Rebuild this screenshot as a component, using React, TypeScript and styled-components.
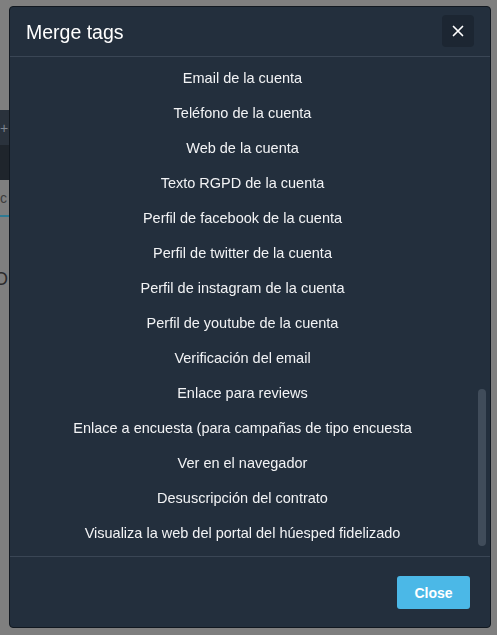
import React from "react";
import styled, { createGlobalStyle } from "styled-components";

const GlobalStyle = createGlobalStyle`
  html, body {
    margin: 0;
    padding: 0;
    width: 100%;
    height: 100%;
    overflow: hidden;
    background: #7f7f7f;
    font-family: "Liberation Sans", Arial, Helvetica, sans-serif;
  }
`;

const Page = styled.div`
  width: 497px;
  height: 635px;
  display: flex;
  flex-direction: column;
  background: #7f7f7f;
`;

const SidePanel = styled.div`
  width: 240px;
  display: flex;
  flex-direction: column;
`;

const Spacer = styled.div<{ $h: number }>`
  height: ${(p) => p.$h}px;
  flex-shrink: 0;
`;

const UnderBar = styled.div<{ $bg: string }>`
  height: 35px;
  background: ${(p) => p.$bg};
  display: flex;
  align-items: center;
  color: #7d8590;
  font-size: 14px;
  padding-left: 0;
`;

const UnderInput = styled.div`
  height: 35px;
  border-bottom: 2px solid #2f7a93;
  display: flex;
  align-items: center;
  color: #3c3c3c;
  font-size: 14px;
`;

const UnderText = styled.div`
  color: #2b2b2b;
  font-size: 18px;
  margin-left: -6px;
`;

const Modal = styled.div`
  position: fixed;
  left: 9px;
  top: 6px;
  width: 482px;
  height: 622px;
  box-sizing: border-box;
  background: #232f3d;
  border: 1px solid #111820;
  border-radius: 4px;
  display: flex;
  flex-direction: column;
  overflow: hidden;
`;

const Header = styled.div`
  height: 50px;
  box-sizing: border-box;
  padding: 0 16px;
  display: flex;
  align-items: center;
  justify-content: space-between;
  border-bottom: 1px solid #3a4655;
  flex-shrink: 0;
`;

const Title = styled.h2`
  margin: 0;
  font-size: 19.5px;
  font-weight: 400;
  color: #ffffff;
  padding-top: 1px;
`;

const IconButton = styled.button`
  width: 32px;
  height: 32px;
  border: none;
  border-radius: 4px;
  background: #1c2632;
  color: #ffffff;
  display: flex;
  align-items: center;
  justify-content: center;
  padding: 0;
  margin-top: -1px;
  cursor: pointer;
`;

const Body = styled.div`
  position: relative;
  flex: 1;
  overflow: hidden;
  border-bottom: 1px solid #3a4655;
`;

const List = styled.ul`
  list-style: none;
  margin: 0;
  padding: 3px 15px 0 0;
  display: flex;
  flex-direction: column;
`;

const Item = styled.li`
  height: 35px;
  display: flex;
  align-items: center;
  justify-content: center;
  color: #f2f3f5;
  font-size: 14.5px;
  white-space: nowrap;
`;

const ScrollThumb = styled.div`
  position: absolute;
  right: 4px;
  bottom: 10px;
  width: 8px;
  height: 157px;
  border-radius: 4px;
  background: #404c5a;
`;

const Footer = styled.div`
  height: 70px;
  box-sizing: border-box;
  padding: 0 20px 0;
  display: flex;
  align-items: center;
  justify-content: flex-end;
  flex-shrink: 0;
`;

const PrimaryButton = styled.button`
  width: 73px;
  height: 33px;
  border: none;
  border-radius: 3px;
  background: #4bb8e7;
  color: #ffffff;
  font-family: "Liberation Sans", Arial, sans-serif;
  font-weight: 700;
  font-size: 14px;
  cursor: pointer;
  margin-top: 1px;
`;

const items = [
  "Email de la cuenta",
  "Teléfono de la cuenta",
  "Web de la cuenta",
  "Texto RGPD de la cuenta",
  "Perfil de facebook de la cuenta",
  "Perfil de twitter de la cuenta",
  "Perfil de instagram de la cuenta",
  "Perfil de youtube de la cuenta",
  "Verificación del email",
  "Enlace para reviews",
  "Enlace a encuesta (para campañas de tipo encuesta",
  "Ver en el navegador",
  "Desuscripción del contrato",
  "Visualiza la web del portal del húesped fidelizado",
];

export default function App() {
  return (
    <>
      <GlobalStyle />
      <Page>
        <SidePanel>
          <Spacer $h={110} />
          <UnderBar $bg="#2a323c">+</UnderBar>
          <UnderBar $bg="#1f252c" />
          <UnderInput>c</UnderInput>
          <Spacer $h={52} />
          <UnderText>O</UnderText>
        </SidePanel>
      </Page>
      <Modal role="dialog" aria-label="Merge tags">
        <Header>
          <Title>Merge tags</Title>
          <IconButton aria-label="Close">
            <svg width="14" height="14" viewBox="0 0 14 14">
              <path d="M2.5 2.5 L11.5 11.5 M11.5 2.5 L2.5 11.5" stroke="#ffffff" strokeWidth="1.7" strokeLinecap="round" />
            </svg>
          </IconButton>
        </Header>
        <Body>
          <List>
            {items.map((t) => (
              <Item key={t}>{t}</Item>
            ))}
          </List>
          <ScrollThumb />
        </Body>
        <Footer>
          <PrimaryButton>Close</PrimaryButton>
        </Footer>
      </Modal>
    </>
  );
}
